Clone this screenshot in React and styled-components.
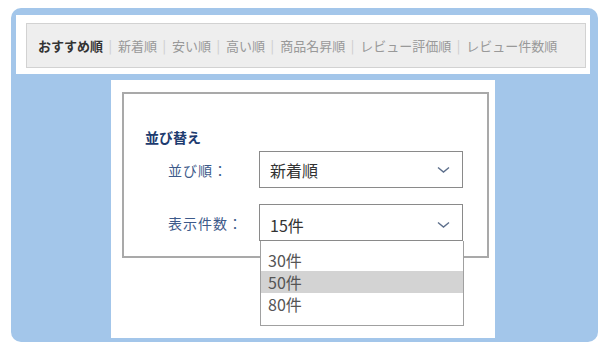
import React from 'react';
import styled, { createGlobalStyle } from 'styled-components';

const Global = createGlobalStyle`
  html, body { margin: 0; padding: 0; background: #fff; }
  body { font-family: "Noto Sans CJK JP", "Noto Sans", sans-serif; }
`;

const Frame = styled.div`
  margin: 8px 0 0 11px;
  width: 587px;
  height: 334px;
  box-sizing: border-box;
  padding: 7px 8px 4px 5px;
  background: #a3c6ea;
  border-radius: 10px;
  display: flex;
  flex-direction: column;
`;

const SortBar = styled.div`
  background: #fff;
  padding: 8px 4px 6px 10px;
`;

const SortList = styled.div`
  height: 45px;
  box-sizing: border-box;
  border: 1px solid #d2d2d2;
  background: #eeeeee;
  display: flex;
  align-items: center;
  padding: 0 0 1px 11px;
  font-size: 13px;
  white-space: nowrap;
`;

const SortItem = styled.span`
  color: ${p => (p.$active ? '#333' : '#999')};
  font-weight: ${p => (p.$active ? 700 : 400)};
`;

const Sep = styled.span`
  color: #ccc;
  padding: 0 6px 0 5.5px;
`;

const Panel = styled.div`
  align-self: center;
  width: 384px;
  flex: 1;
  margin-top: 6px;
  background: #fff;
  padding: 12px 0 0 11px;
  box-sizing: border-box;
`;

const Box = styled.div`
  width: 367px;
  height: 166px;
  box-sizing: border-box;
  border: 2px solid #a9a9a9;
  padding: 33px 0 0 21px;
`;

const Heading = styled.div`
  font-size: 14px;
  font-weight: 700;
  color: #1d3b6f;
  line-height: 20px;
  margin-bottom: 4px;
`;

const Row = styled.div`
  display: flex;
  align-items: center;
  padding-left: 23px;
  margin-bottom: 16px;
  position: relative;
`;

const Label = styled.div`
  width: 91px;
  font-size: 14px;
  color: #3d5a8a;
  letter-spacing: 1px;
`;

const Select = styled.div`
  width: 204px;
  height: 37px;
  box-sizing: border-box;
  border: 1px solid #8a8a8a;
  display: flex;
  align-items: center;
  justify-content: space-between;
  padding: ${p => (p.$low ? '4px' : '0')} 12px 0 10px;
  font-size: 16px;
  color: #333;
  background: #fff;
`;

const Chevron = () => (
  <svg width="13" height="8" viewBox="0 0 13 8">
    <polyline points="1,1.5 6.5,6 12,1.5" fill="none" stroke="#5d6f8c" strokeWidth="1.4" />
  </svg>
);

const Menu = styled.div`
  position: absolute;
  left: 115px;
  top: 37px;
  width: 204px;
  box-sizing: border-box;
  border: 1px solid #a0a0a0;
  border-top: none;
  background: #fff;
  padding: 8px 0 10px;
  z-index: 2;
`;

const Option = styled.div`
  height: 22px;
  line-height: 22px;
  padding-left: 7px;
  font-size: 16px;
  color: #555;
  background: ${p => (p.$hover ? '#d3d3d3' : 'transparent')};
`;

const sorts = ['おすすめ順', '新着順', '安い順', '高い順', '商品名昇順', 'レビュー評価順', 'レビュー件数順'];

export default function App() {
  return (
    <>
      <Global />
      <Frame>
        <SortBar>
          <SortList>
            {sorts.map((s, i) => (
              <React.Fragment key={s}>
                {i > 0 && <Sep>|</Sep>}
                <SortItem $active={i === 0}>{s}</SortItem>
              </React.Fragment>
            ))}
          </SortList>
        </SortBar>
        <Panel>
          <Box>
            <Heading>並び替え</Heading>
            <Row>
              <Label>並び順：</Label>
              <Select>
                <span>新着順</span>
                <Chevron />
              </Select>
            </Row>
            <Row>
              <Label>表示件数：</Label>
              <Select $low>
                <span>15件</span>
                <Chevron />
              </Select>
              <Menu>
                <Option>30件</Option>
                <Option $hover>50件</Option>
                <Option>80件</Option>
              </Menu>
            </Row>
          </Box>
        </Panel>
      </Frame>
    </>
  );
}
